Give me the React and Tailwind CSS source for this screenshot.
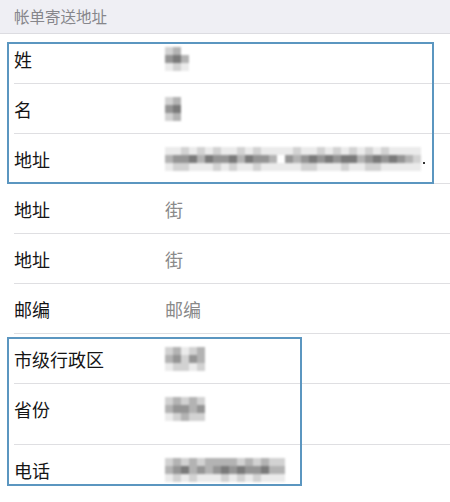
import React from 'react';

const SHADES = [
  'bg-transparent',
  'bg-[#ebebeb]',
  'bg-[#d2d2d2]',
  'bg-[#b3b3b3]',
  'bg-[#959595]',
  'bg-[#7a7a7a]',
];

// blurred/mosaic personal data
function Mosaic({ rows, dot }) {
  return (
    <div className="flex items-end">
      <div className="flex flex-col blur-[0.8px]">
        {rows.map((r, ri) => (
          <div key={ri} className="flex">
            {r.split('').map((c, ci) => (
              <span key={ci} className={`w-[8px] h-[8px] ${SHADES[Number(c)]}`} />
            ))}
          </div>
        ))}
      </div>
      {dot && <span className="ml-[2px] mb-[7px] w-[2px] h-[2px] bg-[#333]" />}
    </div>
  );
}

const ROWS = [
  { label: '姓', mosaic: ['230', '453', '121'] },
  { label: '名', mosaic: ['23', '45', '23'] },
  {
    label: '地址',
    mosaic: [
      '11212121121211112112121212121111',
      '34453544535443043454545534545432',
      '12211121211211111221112112211111',
    ],
    dot: true,
  },
  { label: '地址', value: '街' },
  { label: '地址', value: '街' },
  { label: '邮编', value: '邮编' },
  { label: '市级行政区', mosaic: ['23123', '34243', '12212'] },
  { label: '省份', mosaic: ['23232', '34434', '12322'], tall: true },
  { label: '电话', mosaic: ['232323333232322', '345343454544533', '121211121212111'], last: true },
];

export default function App() {
  return (
    <div className="relative w-[450px] h-[502px] bg-white overflow-hidden font-['Noto_Sans_CJK_SC','Noto_Sans',sans-serif]">
      <div className="h-[34px] bg-[#efeff4] border-b border-[#dcdce1] px-[14px] flex items-center">
        <span className="text-[15.5px] text-[#86868b]">帐单寄送地址</span>
      </div>

      {ROWS.map((row, i) => (
        <div
          key={i}
          className={`ml-[14px] flex ${row.tall ? 'h-[61px] items-start pt-[13px]' : 'h-[50px] items-center'} ${row.last ? '' : 'border-b border-[#dfdfe2]'}`}
        >
          <span className="w-[151px] text-[18px] leading-[24px] text-[#151515]">{row.label}</span>
          {row.value ? (
            <span className="text-[18px] leading-[24px] text-[#8a8a8a]">{row.value}</span>
          ) : (
            <Mosaic rows={row.mosaic} dot={row.dot} />
          )}
        </div>
      ))}

      {/* highlight boxes */}
      <div className="absolute left-[7px] top-[42px] w-[427px] h-[142px] border-2 border-[#5b96c0]" />
      <div className="absolute left-[7px] top-[337px] w-[295px] h-[149px] border-2 border-[#5b96c0]" />
    </div>
  );
}
